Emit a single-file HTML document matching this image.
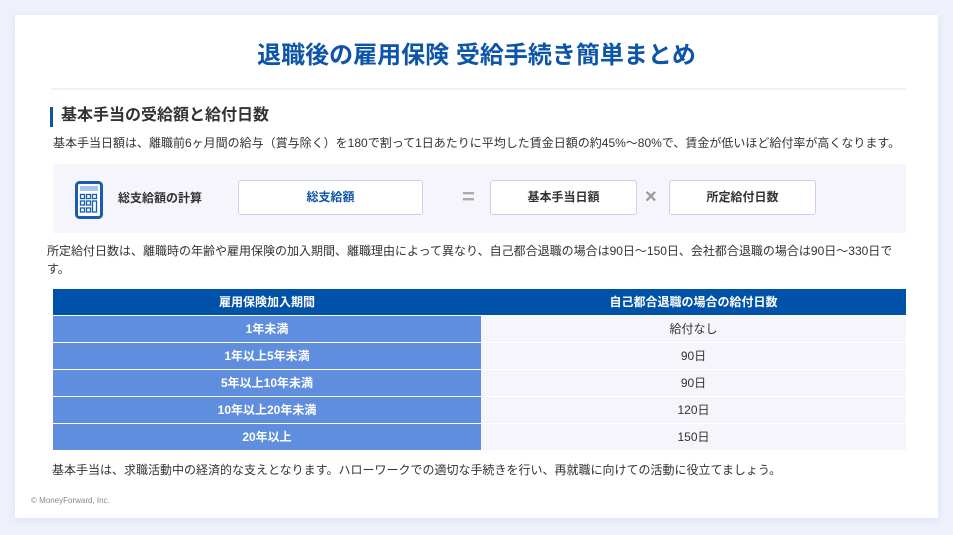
<!DOCTYPE html>
<html><head><meta charset="utf-8"><style>
*{margin:0;padding:0;box-sizing:border-box}
body{width:953px;height:535px;background:#eef1fb;font-family:"Liberation Sans","Noto Sans CJK JP",sans-serif;position:relative;overflow:hidden;color:#333}
.card{position:absolute;left:15px;top:15px;width:923px;height:503px;background:#fff;box-shadow:0 2px 8px rgba(100,120,200,.12)}
.abs{position:absolute}
h1{position:absolute;left:0;width:953px;top:40px;text-align:center;font-size:24px;font-weight:bold;color:#0d55a8;line-height:32px}
.hr{left:51px;top:88px;width:855px;height:2px;background:#eef1fb}
.bar{left:50px;top:107px;width:3px;height:20px;background:#0d55a8}
h2{position:absolute;left:61px;top:105px;font-size:16px;font-weight:bold;color:#333;line-height:22px}
.p{font-size:12px;line-height:18px;color:#333}
.calc{left:53px;top:164px;width:853px;height:69px;background:#f5f5fb}
.bx{position:absolute;top:180px;height:35px;background:#fff;border:1px solid #c6d3f0;border-radius:3px;text-align:center;line-height:33px;font-size:12px;font-weight:bold}
table{position:absolute;left:53px;top:289px;width:853px;border-collapse:collapse;font-size:12px}
th{background:#0052a8;color:#fff;height:26px;font-weight:bold;border-bottom:1px solid #fff}
td{height:27px;text-align:center;border-bottom:1px solid #fff}
td.l{background:#5f8ede;color:#fff;font-weight:bold;width:428px}
td.r{background:#f5f5fb;color:#333}
</style></head><body>
<div class="card"></div>
<h1>退職後の雇用保険 受給手続き簡単まとめ</h1>
<div class="abs hr"></div>
<div class="abs bar"></div>
<h2>基本手当の受給額と給付日数</h2>
<div class="abs p" style="left:53px;top:134px">基本手当日額は、離職前6ヶ月間の給与（賞与除く）を180で割って1日あたりに平均した賃金日額の約45%〜80%で、賃金が低いほど給付率が高くなります。</div>
<div class="abs calc"></div>
<svg class="abs" style="left:75px;top:181px" width="28" height="38" viewBox="0 0 28 38">
<rect x="1.5" y="1.5" width="25" height="35" rx="3" fill="#fff" stroke="#1a5cb0" stroke-width="3"/>
<rect x="5" y="5" width="18" height="5" fill="#a9c3f0"/>
<g fill="none" stroke="#1a5cb0" stroke-width="1.3">
<rect x="5.5" y="13.5" width="4" height="4"/><rect x="11.5" y="13.5" width="4" height="4"/><rect x="17.5" y="13.5" width="4" height="4"/>
<rect x="5.5" y="20" width="4" height="4"/><rect x="11.5" y="20" width="4" height="4"/><rect x="17.5" y="20" width="4" height="11"/>
<rect x="5.5" y="27" width="4" height="4"/><rect x="11.5" y="27" width="4" height="4"/></g>
</svg>
<div class="abs" style="left:118px;top:189px;font-size:12px;font-weight:bold;line-height:18px">総支給額の計算</div>
<div class="bx" style="left:238px;width:185px;color:#0d55a8">総支給額</div>
<div class="abs" style="left:462px;top:184px;font-size:22px;color:#aaa;font-weight:bold">=</div>
<div class="bx" style="left:490px;width:147px">基本手当日額</div>
<div class="abs" style="left:645px;top:185px;font-size:20px;line-height:24px;color:#999;font-weight:bold">×</div>
<div class="bx" style="left:669px;width:147px">所定給付日数</div>
<div class="abs p" style="left:47px;top:242px;width:860px">所定給付日数は、離職時の年齢や雇用保険の加入期間、離職理由によって異なり、自己都合退職の場合は90日〜150日、会社都合退職の場合は90日〜330日です。</div>
<table>
<tr><th>雇用保険加入期間</th><th>自己都合退職の場合の給付日数</th></tr>
<tr><td class="l">1年未満</td><td class="r">給付なし</td></tr>
<tr><td class="l">1年以上5年未満</td><td class="r">90日</td></tr>
<tr><td class="l">5年以上10年未満</td><td class="r">90日</td></tr>
<tr><td class="l">10年以上20年未満</td><td class="r">120日</td></tr>
<tr><td class="l">20年以上</td><td class="r">150日</td></tr>
</table>
<div class="abs p" style="left:52px;top:461px">基本手当は、求職活動中の経済的な支えとなります。ハローワークでの適切な手続きを行い、再就職に向けての活動に役立てましょう。</div>
<div class="abs" style="left:31px;top:496px;font-size:8px;color:#888">© MoneyForward, Inc.</div>
</body></html>
